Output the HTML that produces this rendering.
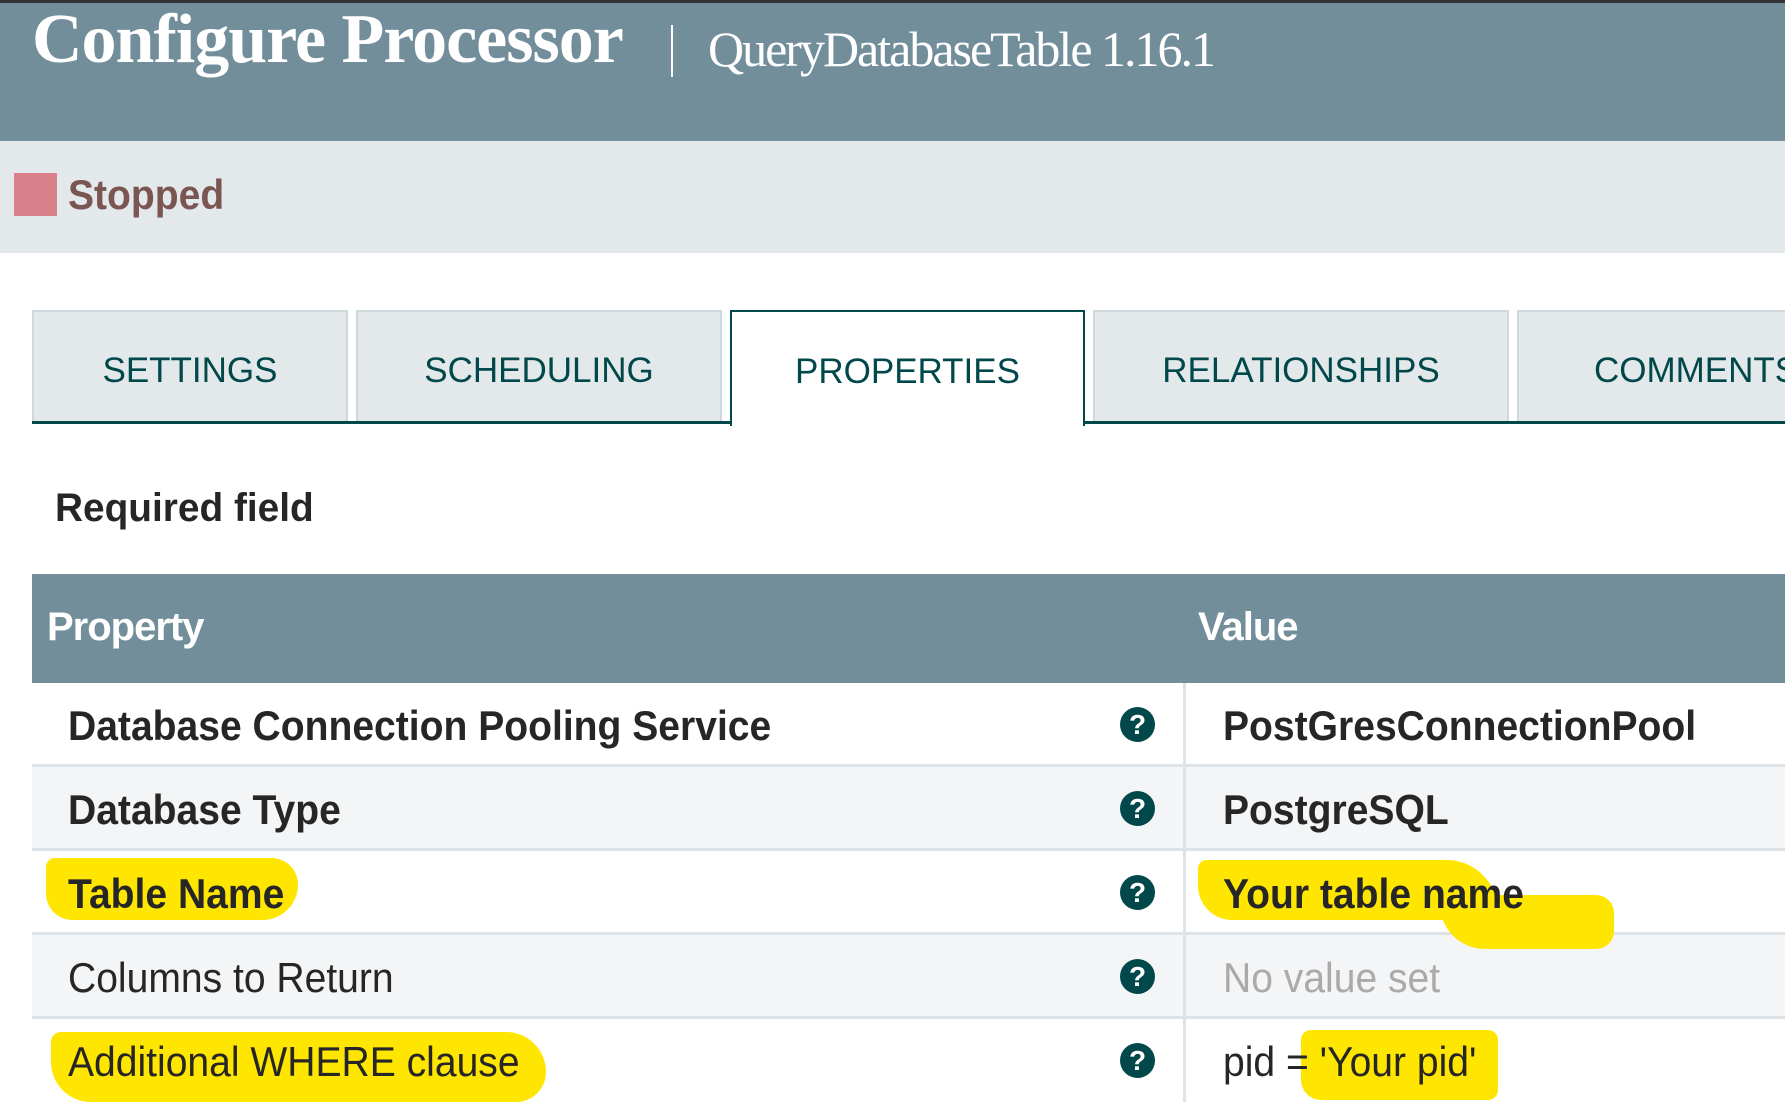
<!DOCTYPE html>
<html><head><meta charset="utf-8"><style>
*{margin:0;padding:0;box-sizing:border-box}
body{width:1785px;height:1102px;overflow:hidden;background:#fff;font-family:"Liberation Sans",sans-serif;position:relative}
.abs{position:absolute}
.hdr{left:0;top:0;width:1785px;height:141px;background:#728e9b;border-top:3px solid #333}
.title{left:32px;top:0px;font-family:"Liberation Serif",serif;font-weight:bold;font-size:70px;color:#fff;letter-spacing:-1px}
.sep{left:671px;top:25px;width:2px;height:52px;background:#fff}
.sub{left:708px;top:20px;font-family:"Liberation Serif",serif;font-size:50px;color:#fff;letter-spacing:-2px}
.status{left:0;top:141px;width:1785px;height:112px;background:#e3e8eb}
.sq{left:14px;top:173px;width:43px;height:43px;background:#d9808a}
.stopped{left:68px;top:171px;font-size:42px;font-weight:bold;color:#7a5552;transform:scaleX(0.93);transform-origin:left}
.tab{top:310px;height:113px;background:#e3e8eb;border:2px solid #cfd8dc;border-bottom:none;color:#004849;font-size:35px;display:flex;align-items:center;justify-content:center;padding-top:6px}
.tab.act{background:#fff;border:2px solid #004849;border-bottom:none;height:116px;z-index:2}
.tline{left:32px;top:421px;width:1753px;height:3px;background:#004849}
.req{left:55px;top:486px;font-size:40px;font-weight:bold;color:#262626;transform:scaleX(0.97);transform-origin:left}
.th{left:32px;top:574px;width:1753px;height:109px;background:#728e9b}
.thl{top:605px;font-size:40px;font-weight:bold;color:#fff;letter-spacing:-1px}
.row{left:32px;width:1753px;height:84px;border-bottom:3px solid #dde3e6}
.vd{left:1183px;top:683px;width:3px;height:419px;background:#dde3e6}
.hl{background:#ffe600;border-radius:20px}
.t{font-size:42px;color:#262626;white-space:nowrap;transform:scaleX(0.93);transform-origin:left}
.b{font-weight:bold}
.q{width:35px;height:35px;border-radius:50%;background:#004849;color:#fff;font-weight:bold;font-size:28px;text-align:center;line-height:35px;left:1120px}
</style></head><body>
<div class="abs hdr"></div>
<div class="abs title">Configure Processor</div>
<div class="abs sep"></div>
<div class="abs sub">QueryDatabaseTable 1.16.1</div>
<div class="abs status"></div>
<div class="abs sq"></div>
<div class="abs stopped">Stopped</div>

<div class="abs tab" style="left:32px;width:316px">SETTINGS</div>
<div class="abs tab" style="left:356px;width:366px">SCHEDULING</div>
<div class="abs tab act" style="left:730px;width:355px">PROPERTIES</div>
<div class="abs tab" style="left:1093px;width:416px">RELATIONSHIPS</div>
<div class="abs tab" style="left:1517px;width:330px;justify-content:flex-start;padding-left:75px">COMMENTS</div>
<div class="abs tline"></div>
<div class="abs" style="left:732px;top:418px;width:351px;height:6px;background:#fff;z-index:3"></div>

<div class="abs req">Required field</div>
<div class="abs th"></div>
<div class="abs thl" style="left:47px">Property</div>
<div class="abs thl" style="left:1198px">Value</div>

<div class="abs row" style="top:683px;background:#fff"></div>
<div class="abs row" style="top:767px;background:#f4f5f6"></div>
<div class="abs row" style="top:851px;background:#fff"></div>
<div class="abs row" style="top:935px;background:#f4f5f6"></div>
<div class="abs row" style="top:1019px;background:#fff;border:none"></div>
<div class="abs vd"></div>

<div class="abs hl" style="left:46px;top:858px;width:252px;height:62px;border-radius:10px 30px 40px 30px"></div>
<div class="abs hl" style="left:1198px;top:860px;width:300px;height:60px;border-radius:10px 60px 10px 40px"></div>
<div class="abs hl" style="left:1440px;top:895px;width:174px;height:54px;border-radius:10px 20px 20px 50px"></div>
<div class="abs hl" style="left:51px;top:1032px;width:495px;height:70px;border-radius:10px 40px 30px 40px"></div>
<div class="abs hl" style="left:1301px;top:1030px;width:197px;height:70px;border-radius:10px 10px 10px 20px"></div>

<div class="abs t b" style="left:68px;top:702px">Database Connection Pooling Service</div>
<div class="abs t b" style="left:68px;top:786px">Database Type</div>
<div class="abs t b" style="left:68px;top:870px">Table Name</div>
<div class="abs t" style="left:68px;top:954px">Columns to Return</div>
<div class="abs t" style="left:68px;top:1038px">Additional WHERE clause</div>

<div class="abs t b" style="left:1223px;top:702px">PostGresConnectionPool</div>
<div class="abs t b" style="left:1223px;top:786px">PostgreSQL</div>
<div class="abs t b" style="left:1223px;top:870px">Your table name</div>
<div class="abs t" style="left:1223px;top:954px;color:#aaa">No value set</div>
<div class="abs t" style="left:1223px;top:1038px">pid = 'Your pid'</div>

<div class="abs q" style="top:707px">?</div>
<div class="abs q" style="top:791px">?</div>
<div class="abs q" style="top:875px">?</div>
<div class="abs q" style="top:959px">?</div>
<div class="abs q" style="top:1043px">?</div>
</body></html>
